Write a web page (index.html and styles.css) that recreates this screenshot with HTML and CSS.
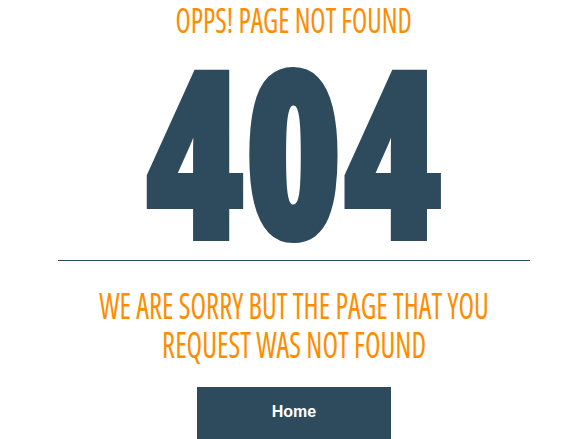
FILE: index.html
```html
<!DOCTYPE html>
<html lang="en">
<head>
<meta charset="utf-8">
<title>404</title>
<link rel="stylesheet" href="styles.css">
</head>
<body>
<main class="page">
  <h1 class="title"><span class="squeeze-title">OPPS! PAGE NOT FOUND</span></h1>
  <div class="code"><span class="squeeze-code">404</span></div>
  <hr class="rule">
  <p class="message"><span class="squeeze-message">WE ARE SORRY BUT THE PAGE THAT YOU<br>REQUEST WAS NOT FOUND</span></p>
  <a class="home" href="#">Home</a>
</main>
</body>
</html>
```
FILE: styles.css
```css
html, body {
  margin: 0;
  padding: 0;
  background: #ffffff;
  overflow: hidden;
}
.page {
  display: flex;
  flex-direction: column;
  align-items: center;
  padding-top: 4px;
}
.title {
  margin: 0;
  height: 32px;
  font-family: "Open Sans", sans-serif;
  font-stretch: 75%;
  font-weight: 500;
  font-size: 35px;
  line-height: 32px;
  color: #ff8c00;
  text-align: center;
  white-space: nowrap;
}
.squeeze-title {
  display: inline-block;
  transform: scaleX(0.80);
  transform-origin: center;
}
.code {
  margin-top: 22px;
  height: 180px;
  font-family: "Open Sans", sans-serif;
  font-stretch: 75%;
  font-weight: 800;
  font-size: 235px;
  line-height: 180px;
  color: #2e4b5e;
  text-align: center;
  white-space: nowrap;
}
.squeeze-code {
  display: inline-block;
  transform: scaleX(0.85);
  transform-origin: center;
  -webkit-text-stroke: 4px #2e4b5e;
}
.rule {
  margin: 22px 0 0;
  width: 472px;
  height: 1px;
  border: 0;
  background: #2e4b5e;
}
.message {
  margin: 25px 0 0;
  font-family: "Open Sans", sans-serif;
  font-stretch: 75%;
  font-weight: 500;
  font-size: 36px;
  line-height: 39px;
  color: #ff8c00;
  text-align: center;
  white-space: nowrap;
}
.squeeze-message {
  display: inline-block;
  transform: scaleX(0.795);
  transform-origin: center;
}
.home {
  display: block;
  margin-top: 23px;
  width: 194px;
  padding: 15px 0 17px;
  line-height: 20px;
  background: #2e4b5e;
  color: #ffffff;
  font-family: "Liberation Sans", Arial, sans-serif;
  font-weight: bold;
  font-size: 16px;
  text-align: center;
  text-decoration: none;
}
```
